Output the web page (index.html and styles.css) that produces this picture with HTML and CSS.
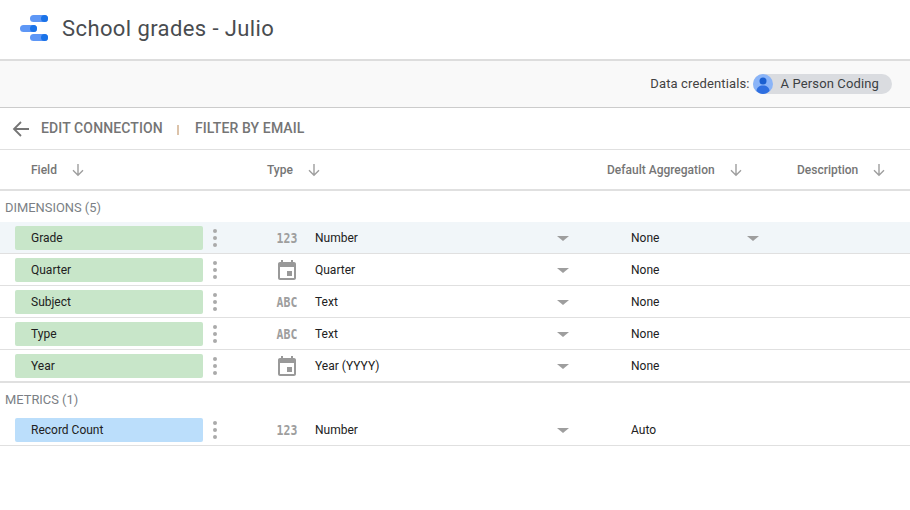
FILE: index.html
```html
<!DOCTYPE html>
<html>

	<head>
		<meta charset="UTF-8">
		<title>School grades - Julio</title>
		<link rel="stylesheet" href="styles.css">
	</head>

	<body>
		<svg class="defs" width="0" height="0">
			<symbol id="down" viewBox="0 0 14 14">
				<path d="M7 1v11M2 7.2l5 5 5-5" fill="none" stroke="currentColor" stroke-width="1.4" />
			</symbol>
			<symbol id="cal" viewBox="0 0 24 24">
				<path d="M19 4h-1V2h-2v2H8V2H6v2H5c-1.1 0-2 .9-2 2v14c0 1.1.9 2 2 2h14c1.100 0 2-.9 2-2V6c0-1.100-.9-2-2-2zm0 16H5V9h14v11zm-7-7h5v5h-5z" fill="currentColor" />
			</symbol>
		</svg>

		<header class="top">
			<svg class="logo" width="30" height="26" viewBox="0 0 30 26">
				<rect x="10" y="0" width="18" height="7" rx="3.500" fill="#5e97f6" />
				<circle cx="24.500" cy="3.500" r="3.500" fill="#1a73e8" />
				<rect x="0" y="10" width="17" height="7" rx="3.500" fill="#5e97f6" />
				<circle cx="13.500" cy="13.500" r="3.500" fill="#1a73e8" />
				<rect x="10" y="19" width="18" height="7" rx="3.500" fill="#5e97f6" />
				<circle cx="24.500" cy="22.500" r="3.500" fill="#1a73e8" />
			</svg>
			<h1>School grades - Julio</h1>
		</header>

		<div class="creds">
			<span>Data credentials:</span>
			<div class="chip-user">
				<svg class="avatar" width="20" height="20" viewBox="0 0 20 20">
					<circle cx="10" cy="10" r="10" fill="#8ab4f8" />
					<circle cx="10" cy="7" r="3.500" fill="#1a5fd0" />
					<path d="M3.500 17c0-3.500 3-5.500 6.500-5.500s6.500 2 6.500 5.500c-1.800 2-4 3-6.500 3s-4.700-1-6.500-3z" fill="#2f6fe0" />
				</svg>
				<span>A Person Coding</span>
			</div>
		</div>

		<nav class="crumbs">
			<svg class="back" width="18" height="16" viewBox="0 0 18 16">
				<path d="M17 8H2M9 1L2 8l7 7" fill="none" stroke="#757575" stroke-width="1.800" />
			</svg>
			<span>EDIT CONNECTION</span>
			<i class="sep"></i>
			<span>FILTER BY EMAIL</span>
		</nav>

		<div class="cols">
			<div class="col">Field <svg><use href="#down" /></svg></div>
			<div class="col">Type <svg><use href="#down" /></svg></div>
			<div class="col">Default Aggregation <svg><use href="#down" /></svg></div>
			<div class="col">Description <svg><use href="#down" /></svg></div>
		</div>

		<div class="group">DIMENSIONS (5)</div>
		<div class="row hover">
			<div class="chip">Grade</div>
			<div class="kebab"><b></b><b></b><b></b></div>
			<div class="kind num">123</div>
			<div class="sel type">Number<i></i></div>
			<div class="sel agg">None<i></i></div>
		</div>
		<div class="row">
			<div class="chip">Quarter</div>
			<div class="kebab"><b></b><b></b><b></b></div>
			<div class="kind"><svg width="24" height="24"><use href="#cal" /></svg></div>
			<div class="sel type">Quarter<i></i></div>
			<div class="sel agg">None</div>
		</div>
		<div class="row">
			<div class="chip">Subject</div>
			<div class="kebab"><b></b><b></b><b></b></div>
			<div class="kind num">ABC</div>
			<div class="sel type">Text<i></i></div>
			<div class="sel agg">None</div>
		</div>
		<div class="row">
			<div class="chip">Type</div>
			<div class="kebab"><b></b><b></b><b></b></div>
			<div class="kind num">ABC</div>
			<div class="sel type">Text<i></i></div>
			<div class="sel agg">None</div>
		</div>
		<div class="row end">
			<div class="chip">Year</div>
			<div class="kebab"><b></b><b></b><b></b></div>
			<div class="kind"><svg width="24" height="24"><use href="#cal" /></svg></div>
			<div class="sel type">Year (YYYY)<i></i></div>
			<div class="sel agg">None</div>
		</div>

		<div class="group">METRICS (1)</div>
		<div class="row">
			<div class="chip blue">Record Count</div>
			<div class="kebab"><b></b><b></b><b></b></div>
			<div class="kind num">123</div>
			<div class="sel type">Number<i></i></div>
			<div class="sel agg">Auto</div>
		</div>
	</body>

</html>
```

FILE: styles.css
```css
* {
	margin: 0;
	padding: 0;
	box-sizing: border-box;
}

body {
	font-family: Roboto, "Liberation Sans", sans-serif;
	font-size: 12px;
	color: #212121;
	background: #fff;
	overflow: hidden;
}

.defs {
	position: absolute;
}

.top {
	height: 61px;
	display: flex;
	align-items: center;
	padding: 0 0 4px 20px;
	border-bottom: 2px solid #ddd;
}

.logo {
	margin-right: 12px;
}

.top h1 {
	margin-top: 2px;
	font-size: 22px;
	font-weight: 400;
	letter-spacing: .4px;
	color: #494c50;
}

.creds {
	height: 47px;
	display: flex;
	align-items: center;
	justify-content: flex-end;
	padding-right: 18px;
	font-size: 13px;
	letter-spacing: .13px;
	color: #424242;
	background: #f9f9f9;
	border-bottom: 1px solid #ccc;
}

.creds span {
	padding-bottom: 2px;
}

.chip-user {
	height: 20px;
	display: flex;
	align-items: center;
	margin-left: 3px;
	padding-right: 13px;
	border-radius: 10px;
	background: #dadce0;
	color: #3c4043;
}

.avatar {
	margin-right: 8px;
}

.crumbs {
	height: 42px;
	display: flex;
	align-items: center;
	padding-left: 12px;
	font-size: 14px;
	font-weight: 500;
	letter-spacing: .12px;
	color: #757575;
	border-bottom: 1px solid #e0e0e0;
}

.crumbs span {
	padding-bottom: 2px;
}

.back {
	margin-right: 11px;
}

.sep {
	width: 2px;
	height: 10px;
	margin: 3px 16px 0 14px;
	background: #dcc3aa;
}

.cols {
	height: 41px;
	display: grid;
	grid-template-columns: 236px 340px 190px 1fr;
	align-items: center;
	padding-left: 31px;
	font-weight: 500;
	color: #757575;
	border-bottom: 2px solid #e0e0e0;
}

.col {
	display: flex;
	align-items: center;
}

.col svg {
	width: 14px;
	height: 14px;
	margin-left: 14px;
	color: #9e9e9e;
}

.group {
	height: 31px;
	padding: 10px 0 0 5px;
	font-size: 12.9px;
	line-height: 14px;
	color: #7b7f85;
}

.row {
	height: 32px;
	display: flex;
	align-items: center;
	padding: 1px 0 0 15px;
	border-bottom: 1px solid #e0e0e0;
}

.row.hover {
	background: #f1f6f9;
}

.row.end {
	height: 33px;
	border-bottom: 2px solid #e0e0e0;
}

.chip {
	width: 188px;
	height: 24px;
	line-height: 24px;
	padding-left: 16px;
	border-radius: 2px;
	background: #c8e6c9;
}

.chip.blue {
	background: #bbdefb;
}

.kebab {
	width: 24px;
	display: flex;
	flex-direction: column;
	align-items: center;
	gap: 3px;
}

.kebab b {
	width: 4px;
	height: 4px;
	border-radius: 50%;
	background: #aaa;
}

.kind {
	width: 24px;
	height: 24px;
	margin-left: 48px;
	display: flex;
	align-items: center;
	justify-content: center;
	color: #999;
}

.kind.num {
	font-family: "DejaVu Sans Mono", monospace;
	font-size: 11.5px;
	font-weight: 700;
	color: #9e9e9e;
	transform: scaleY(1.2);
}

.sel {
	display: flex;
	justify-content: space-between;
	align-items: center;
}

.sel i {
	width: 0;
	height: 0;
	border-left: 6px solid transparent;
	border-right: 6px solid transparent;
	border-top: 5px solid #9e9e9e;
}

.type {
	width: 254px;
	margin-left: 16px;
}

.agg {
	width: 128px;
	margin-left: 62px;
}
```
